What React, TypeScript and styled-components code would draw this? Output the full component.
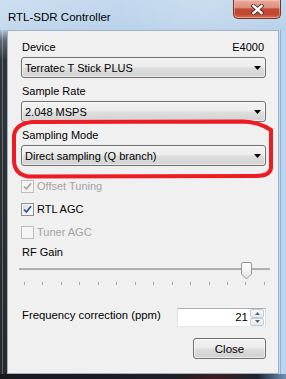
import React from "react";
import styled, { createGlobalStyle } from "styled-components";

const Global = createGlobalStyle`
  html, body { margin: 0; padding: 0; background: #1b1f24; }
  body { width: 286px; height: 379px; overflow: hidden; font-family: "Liberation Sans", Arial, sans-serif; }
  * { box-sizing: border-box; }
`;

const FONT = `"Liberation Sans", Arial, sans-serif`;

const Window = styled.div`
  position: relative;
  width: 286px;
  height: 379px;
  display: flex;
  flex-direction: column;
  background: #1b1f24;
  font-family: ${FONT};
  font-size: 11px;
  color: #000;
`;

const TitleBar = styled.div`
  height: 30px;
  flex: none;
  display: flex;
  justify-content: space-between;
  align-items: flex-start;
  padding: 0 5px 0 8px;
  background:
    linear-gradient(100deg, rgba(255,255,255,0.18) 0%, rgba(255,255,255,0) 40%, rgba(255,255,255,0.12) 70%, rgba(255,255,255,0) 100%),
    linear-gradient(180deg, #c3d8ee 0%, #bed5ec 60%, #b8d0e9 100%);
`;

const Title = styled.div`
  margin-top: 10px;
  font-size: 11.5px;
  line-height: 14px;
  color: #000;
`;

const CloseX = styled.div`
  width: 48px;
  height: 19px;
  display: flex;
  align-items: center;
  justify-content: center;
  border: 1px solid #7a3325;
  border-top: none;
  border-radius: 0 0 5px 5px;
  background: linear-gradient(180deg, #e8ab9e 0%, #dc8f7e 42%, #c54a33 50%, #c0452f 78%, #d8735d 100%);
  box-shadow: inset 0 0 0 1px rgba(255, 210, 200, 0.45);
`;

const Body = styled.div`
  flex: 1;
  display: flex;
  min-height: 0;
`;

const LeftFrame = styled.div`
  width: 7px;
  flex: none;
  background:
    linear-gradient(90deg, rgba(0,0,0,0) 0 2px, rgba(255,255,255,0.28) 2px 3px, rgba(0,0,0,0) 3px),
    linear-gradient(180deg, #aac3dd 0px, #5f6a76 10px, #30353b 30px, #262a2f 100%);
`;

const RightFrame = styled.div`
  width: 7px;
  flex: none;
  background: linear-gradient(90deg, #c7d9ec 0 1px, #8fb1da 1px 2px, #bcd4ee 2px);
`;

const BottomFrame = styled.div`
  height: 5px;
  flex: none;
  background: linear-gradient(90deg, #15181c 0%, #1c1f24 60%, #3a1d22 75%, #1d2430 90%, #6f8fb8 100%);
`;

const Client = styled.div`
  flex: 1;
  display: flex;
  flex-direction: column;
  background: #f0f0f0;
  border: 1px solid #a3b2c3;
  padding: 9px 12px 0 13px;
`;

const Label = styled.div<{ $gap?: number }>`
  height: 14px;
  line-height: 14px;
  margin-top: ${(p) => p.$gap ?? 0}px;
  padding-left: 1px;
  white-space: nowrap;
`;

const LabelRow = styled.div`
  display: flex;
  justify-content: space-between;
  height: 14px;
  line-height: 14px;
  padding: 0 2px 0 1px;
`;

const Combo = styled.div`
  margin-top: 3px;
  height: 21px;
  display: flex;
  align-items: center;
  justify-content: space-between;
  padding: 0 4px 0 3px;
  border: 1px solid #707070;
  border-radius: 3px;
  background: linear-gradient(180deg, #f3f3f3 0%, #ececec 47%, #dedede 53%, #d2d2d2 100%);
  box-shadow: inset 0 0 0 1px rgba(255, 255, 255, 0.55);
  white-space: nowrap;
`;

const Checks = styled.div`
  margin-top: 14px;
  display: flex;
  flex-direction: column;
  gap: 10px;
`;

const CheckRow = styled.div<{ $disabled?: boolean }>`
  display: flex;
  align-items: center;
  gap: 3px;
  height: 13px;
  line-height: 13px;
  color: ${(p) => (p.$disabled ? "#a3a3a3" : "#000")};
`;

const Box = styled.span<{ $disabled?: boolean }>`
  width: 13px;
  height: 13px;
  flex: none;
  display: inline-flex;
  align-items: center;
  justify-content: center;
  border: 1px solid ${(p) => (p.$disabled ? "#bdbdbd" : "#8e8f8f")};
  background: ${(p) =>
    p.$disabled
      ? "#f4f4f4"
      : "linear-gradient(135deg, #d6d8db 0%, #eeeff0 50%, #fdfdfd 100%)"};
  box-shadow: inset 0 0 0 1px ${(p) => (p.$disabled ? "#f7f7f7" : "#f4f4f4")};
`;

const Slider = styled.div`
  position: relative;
  margin: 3px -4px 0 -2px;
  height: 24px;
  display: flex;
  flex-direction: column;
`;

const Track = styled.div`
  margin-top: 6px;
  height: 3px;
  background: linear-gradient(180deg, #b0b0b0 0 2px, #e9e9e9 2px 3px);
`;

const Ticks = styled.div`
  margin-top: 11px;
  display: flex;
  justify-content: space-between;
  padding: 0 5px 0 5px;
`;

const Tick = styled.span`
  width: 1px;
  height: 3px;
  background: #a4a4a4;
`;

const Thumb = styled.svg`
  position: absolute;
  top: 0;
`;

const FreqRow = styled.div`
  margin-top: 22px;
  display: flex;
  justify-content: space-between;
  align-items: flex-start;
`;

const FreqLabel = styled.div`
  height: 14px;
  line-height: 14px;
  padding-left: 1px;
  white-space: nowrap;
  font-size: 11.3px;
`;

const NumBox = styled.div`
  width: 89px;
  height: 19px;
  display: flex;
  border: 1px solid;
  border-color: #abadb3 #dbdfe6 #e3e9ef #e2e3ea;
  background: #fff;
`;

const NumValue = styled.div`
  flex: 1;
  text-align: right;
  line-height: 17px;
  padding-right: 2px;
  font-size: 11.5px;
`;

const Spin = styled.div`
  width: 15px;
  display: flex;
  flex-direction: column;
  padding: 0 1px 0 0;
`;

const SpinBtn = styled.div`
  flex: 1;
  display: flex;
  align-items: center;
  justify-content: center;
  border: 1px solid #c4ccd6;
  border-radius: 2px;
  background: linear-gradient(180deg, #f6f7f9 0%, #e6e9ed 100%);
`;

const Footer = styled.div`
  margin-top: 11px;
  display: flex;
  justify-content: flex-end;
`;

const Button = styled.div`
  width: 73px;
  height: 21px;
  display: flex;
  align-items: center;
  justify-content: center;
  border: 1px solid #707070;
  border-radius: 3px;
  background: linear-gradient(180deg, #f2f2f2 0%, #ebebeb 47%, #dddddd 53%, #cfcfcf 100%);
  box-shadow: inset 0 0 0 1px rgba(255, 255, 255, 0.6);
  font-size: 11.5px;
`;

const Annotation = styled.svg`
  position: absolute;
  left: 0;
  top: 0;
  pointer-events: none;
`;

const Arrow = () => (
  <svg width="7" height="4" viewBox="0 0 7 4">
    <path d="M0 0H7L3.5 4Z" fill="#000" />
  </svg>
);

const Check = ({ color }: { color: string }) => (
  <svg width="9" height="9" viewBox="0 0 9 9">
    <path d="M1 4.5 L3.4 7 L8 1.2" fill="none" stroke={color} strokeWidth="1.8" />
  </svg>
);

const CheckBox = ({ label, checked, disabled }: { label: string; checked?: boolean; disabled?: boolean }) => (
  <CheckRow $disabled={disabled}>
    <Box $disabled={disabled}>{checked && <Check color={disabled ? "#a9a9a9" : "#33508f"} />}</Box>
    <span>{label}</span>
  </CheckRow>
);

const TICKS = 14;

export default function App() {
  const value = 12;
  const pad = 5;
  const range = 240;
  const thumbLeft = pad + (value / (TICKS - 1)) * range + 0.5 - 5.5;

  return (
    <>
      <Global />
      <Window>
        <TitleBar>
          <Title>RTL-SDR Controller</Title>
          <CloseX>
            <svg width="13" height="11" viewBox="0 0 13 11">
              <path d="M2.5 2 L10.5 9 M10.5 2 L2.5 9" stroke="#4a2a24" strokeWidth="4.2" strokeLinecap="square" />
              <path d="M2.5 2 L10.5 9 M10.5 2 L2.5 9" stroke="#fff" strokeWidth="2.4" strokeLinecap="square" />
            </svg>
          </CloseX>
        </TitleBar>
        <Body>
          <LeftFrame />
          <Client>
            <LabelRow>
              <span>Device</span>
              <span>E4000</span>
            </LabelRow>
            <Combo>
              <span>Terratec T Stick PLUS</span>
              <Arrow />
            </Combo>
            <Label $gap={6}>Sample Rate</Label>
            <Combo>
              <span>2.048 MSPS</span>
              <Arrow />
            </Combo>
            <Label $gap={6}>Sampling Mode</Label>
            <Combo>
              <span>Direct sampling (Q branch)</span>
              <Arrow />
            </Combo>
            <Checks>
              <CheckBox label="Offset Tuning" checked disabled />
              <CheckBox label="RTL AGC" checked />
              <CheckBox label="Tuner AGC" disabled />
            </Checks>
            <Label $gap={6}>RF Gain</Label>
            <Slider>
              <Track />
              <Ticks>
                {Array.from({ length: TICKS }).map((_, i) => (
                  <Tick key={i} />
                ))}
              </Ticks>
              <Thumb width="11" height="18" viewBox="0 0 11 18" style={{ left: `${thumbLeft}px` }}>
                <defs>
                  <linearGradient id="tg" x1="0" y1="0" x2="0" y2="1">
                    <stop offset="0" stopColor="#ffffff" />
                    <stop offset="1" stopColor="#e4e4e4" />
                  </linearGradient>
                </defs>
                <path
                  d="M2 0.5 H9 Q10.5 0.5 10.5 2 V12 L5.5 17 L0.5 12 V2 Q0.5 0.5 2 0.5 Z"
                  fill="url(#tg)"
                  stroke="#969696"
                />
              </Thumb>
            </Slider>
            <FreqRow>
              <FreqLabel>Frequency correction (ppm)</FreqLabel>
              <NumBox>
                <NumValue>21</NumValue>
                <Spin>
                  <SpinBtn>
                    <svg width="5" height="3" viewBox="0 0 5 3">
                      <path d="M0 3H5L2.5 0Z" fill="#51647f" />
                    </svg>
                  </SpinBtn>
                  <SpinBtn>
                    <svg width="5" height="3" viewBox="0 0 5 3">
                      <path d="M0 0H5L2.5 3Z" fill="#51647f" />
                    </svg>
                  </SpinBtn>
                </Spin>
              </NumBox>
            </FreqRow>
            <Footer>
              <Button>Close</Button>
            </Footer>
          </Client>
          <RightFrame />
        </Body>
        <BottomFrame />
        <Annotation width="286" height="379" viewBox="0 0 286 379">
          <path
            d="M32 122 L243 121.5 Q259 122 271 130 L271 168 Q270 176 256 176 L28 176.5 Q14 174 14 160 L14 136 Q15 124 32 122 Z"
            fill="none"
            stroke="#ed1c24"
            strokeWidth="4"
          />
        </Annotation>
      </Window>
    </>
  );
}
